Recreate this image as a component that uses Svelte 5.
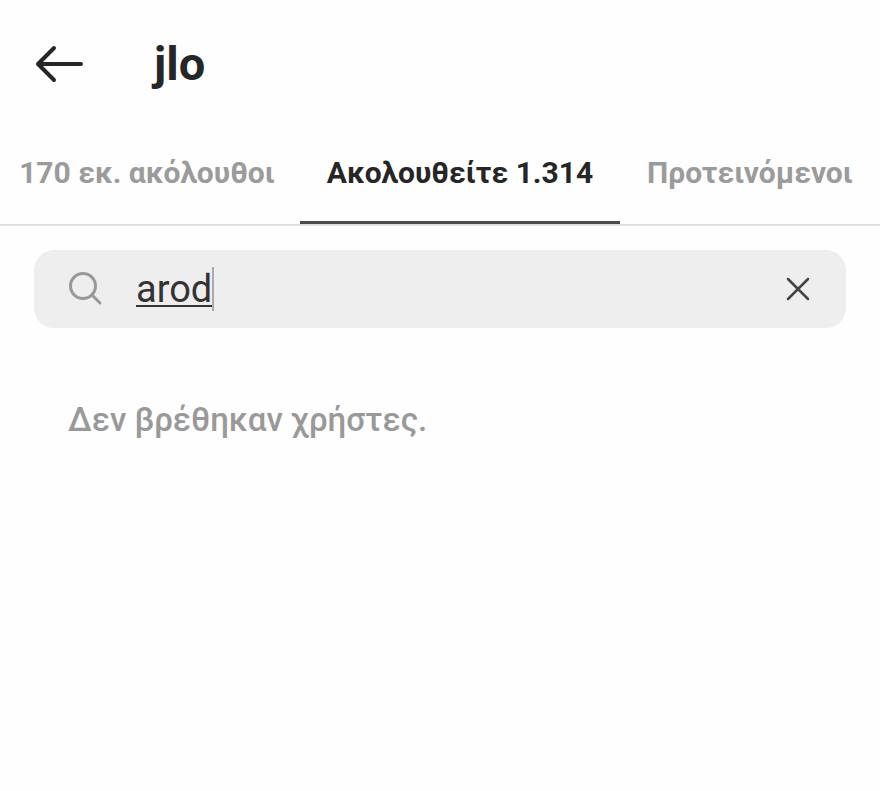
<script lang="ts">
  type Tab = {
    id: string;
    label: string;
  };

  const username = 'jlo';

  const tabs: Tab[] = [
    { id: 'followers', label: '170 εκ. ακόλουθοι' },
    { id: 'following', label: 'Ακολουθείτε 1.314' },
    { id: 'suggested', label: 'Προτεινόμενοι' }
  ];

  let activeTab = $state('following');
  let query = $state('arod');

  const clearQuery = () => {
    query = '';
  };
</script>

<header class="top-bar">
  <button class="icon-button back" type="button" aria-label="Πίσω">
    <svg viewBox="0 0 50 40" width="50" height="40">
      <path d="M47 20H4M20 4L4 20L20 36" />
    </svg>
  </button>
  <h1>{username}</h1>
</header>

<div class="tabs" role="tablist">
  {#each tabs as tab (tab.id)}
    <button
      class="tab"
      class:active={tab.id === activeTab}
      type="button"
      role="tab"
      aria-selected={tab.id === activeTab}
      onclick={() => (activeTab = tab.id)}
    >
      {tab.label}
    </button>
  {/each}
</div>

<main>
  <div class="search">
    <label class="field">
      <svg class="search-icon" viewBox="0 0 36 36" width="36" height="36">
        <circle cx="15" cy="15" r="12.5" />
        <path d="M24 24L32 32" />
      </svg>
      <input type="text" aria-label="Αναζήτηση" spellcheck="false" autocomplete="off" bind:value={query} />
      <span class="caret"></span>
    </label>
    <button class="icon-button clear" type="button" aria-label="Διαγραφή" onclick={clearQuery}>
      <svg viewBox="0 0 24 24" width="24" height="24">
        <path d="M2 2L22 22M22 2L2 22" />
      </svg>
    </button>
  </div>

  <p class="empty">Δεν βρέθηκαν χρήστες.</p>
</main>

<style>
  :global(body) {
    margin: 0;
    background: #fefefe;
    color: #262626;
    font-family: Roboto, 'Liberation Sans', sans-serif;
  }

  svg {
    display: block;
    fill: none;
    stroke: currentColor;
    stroke-linecap: round;
    stroke-linejoin: round;
  }

  .icon-button {
    flex: none;
    padding: 0;
    border: 0;
    background: none;
    color: inherit;
    cursor: pointer;
  }

  .top-bar {
    display: flex;
    align-items: center;
    gap: 70px;
    height: 128px;
    padding: 0 34px;
  }

  .back svg {
    stroke-width: 4;
  }

  h1 {
    margin: 0;
    font-size: 47px;
    font-weight: 700;
    line-height: 56px;
  }

  .tabs {
    display: grid;
    grid-template-columns: 300fr 320fr 260fr;
    border-bottom: 2px solid #e0e0e0;
  }

  .tab {
    height: 96px;
    padding: 0 0 4px;
    border: 0;
    border-bottom: 3px solid transparent;
    background: none;
    color: #9b9b9b;
    font-family: inherit;
    font-size: 30px;
    font-weight: 700;
    line-height: 36px;
    white-space: nowrap;
    cursor: pointer;
  }

  .tab:first-child {
    padding-right: 6px;
  }

  .tab.active {
    border-bottom-color: #4a4a4a;
    color: #262626;
  }

  main {
    padding: 24px 34px;
  }

  .search {
    display: flex;
    align-items: center;
    height: 78px;
    padding: 0 36px 0 34px;
    border-radius: 20px;
    background: #eeeeee;
  }

  .field {
    display: flex;
    flex: 1;
    align-items: center;
    min-width: 0;
    cursor: text;
  }

  .search-icon {
    flex: none;
    margin-right: 32px;
    color: #999999;
    stroke-width: 3;
  }

  input {
    field-sizing: content;
    min-width: 0;
    padding: 0;
    border: 0;
    outline: none;
    background: none;
    color: #333333;
    font-family: inherit;
    font-size: 38px;
    line-height: 44px;
    text-decoration: underline;
    text-decoration-thickness: 2px;
    text-underline-offset: 3px;
  }

  .caret {
    width: 2px;
    height: 44px;
    background: #aaaaaa;
  }

  .clear {
    color: #444444;
  }

  .clear svg {
    stroke-width: 2.5;
  }

  .empty {
    margin: 72px 34px 0;
    color: #999999;
    font-size: 33px;
    font-weight: 500;
    line-height: 40px;
  }
</style>
